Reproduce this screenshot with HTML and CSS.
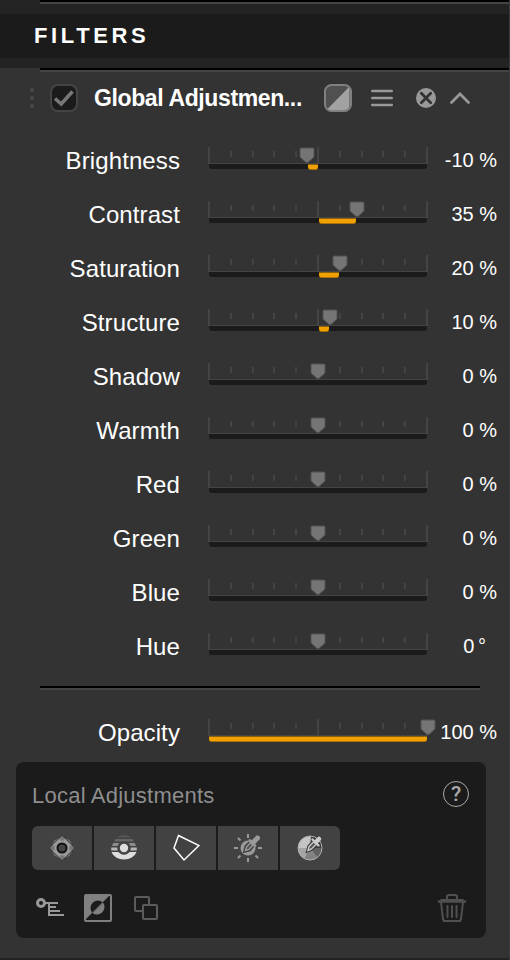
FILE: index.html
```html
<!DOCTYPE html>
<html lang="en">
<head>
    <meta charset="UTF-8">
    <meta name="viewport" content="width=device-width, initial-scale=1.0">
    <title>Filters</title>
    <link rel="stylesheet" href="styles.css">
</head>
<body>

<!-- shared slider shapes -->
<svg class="defs">
    <symbol id="scale" viewBox="0 0 220 17">
        <path fill="#444" d="M0 0h2v16H0zM109 0h2v16h-2zM218 0h2v16h-2zM0 16h220v1H0z"/>
        <path fill="#444" d="M22 4h2v6h-2zM44 4h2v6h-2zM65 4h2v6h-2zM87 4h2v6h-2zM131 4h2v6h-2zM153 4h2v6h-2zM174 4h2v6h-2zM196 4h2v6h-2z"/>
    </symbol>
    <symbol id="thumb" viewBox="0 0 16 17">
        <path fill="#757575" stroke="#525252" d="M1 2Q1 1 2 1H14Q15 1 15 2V10L9.500 15Q8 16.300 6.500 15L1 10Z"/>
    </symbol>
</svg>

<div class="panel">
    <div class="top"></div>
    <header>
        <h1>FILTERS</h1>
    </header>
    <div class="gap"></div>

    <section class="filter">
        <div class="filter-head">
            <svg class="grip" width="6" height="22" viewBox="0 0 6 22">
                <g fill="#494949"><circle cx="3" cy="3" r="2"/><circle cx="3" cy="11" r="2"/><circle cx="3" cy="19" r="2"/></g>
            </svg>
            <svg class="check" width="28" height="28" viewBox="0 0 28 28">
                <rect x="1" y="1" width="26" height="26" rx="7" fill="#1b1b1b" stroke="#444" stroke-width="2"/>
                <path d="M5 14.500L11.200 20L22.500 7.500" fill="none" stroke="#777" stroke-width="3.600"/>
            </svg>
            <h2>Global Adjustmen...</h2>
            <svg class="mask" width="28" height="28" viewBox="0 0 28 28">
                <rect x="1" y="1" width="26" height="26" rx="6" fill="#505050"/>
                <path d="M25.500 2.500V21Q25.500 26 20 26H2.500Z" fill="#a2a2a2"/>
                <rect x="1" y="1" width="26" height="26" rx="6.500" fill="none" stroke="#808080" stroke-width="2"/>
            </svg>
            <svg class="menu" width="22" height="18" viewBox="0 0 22 18">
                <path d="M1.300 2H20.700M1.300 9H20.700M1.300 16H20.700" stroke="#999" stroke-width="2.600" stroke-linecap="round"/>
            </svg>
            <svg class="close" width="20" height="20" viewBox="0 0 20 20">
                <circle cx="10" cy="10" r="10" fill="#999"/>
                <path d="M5.300 5.300L14.700 14.700M14.700 5.300L5.300 14.700" stroke="#333" stroke-width="2.800" stroke-linecap="round"/>
            </svg>
            <svg class="fold" width="20" height="12" viewBox="0 0 20 12">
                <path d="M1.500 10.500L10 2L18.500 10.500" fill="none" stroke="#999" stroke-width="2.700" stroke-linecap="round"/>
            </svg>
        </div>

        <div class="rows">
            <div class="row">
                <label>Brightness</label>
                <div class="slider">
                    <svg class="scale"><use href="#scale"/></svg>
                    <div class="track"></div>
                    <div class="fill" style="left: 100px; width: 10px"></div>
                    <svg class="thumb" style="left: 99px"><use href="#thumb"/></svg>
                </div>
                <output>-10 %</output>
            </div>
            <div class="row">
                <label>Contrast</label>
                <div class="slider">
                    <svg class="scale"><use href="#scale"/></svg>
                    <div class="track"></div>
                    <div class="fill" style="left: 111px; width: 37px"></div>
                    <svg class="thumb" style="left: 149px"><use href="#thumb"/></svg>
                </div>
                <output>35 %</output>
            </div>
            <div class="row">
                <label>Saturation</label>
                <div class="slider">
                    <svg class="scale"><use href="#scale"/></svg>
                    <div class="track"></div>
                    <div class="fill" style="left: 111px; width: 20px"></div>
                    <svg class="thumb" style="left: 132px"><use href="#thumb"/></svg>
                </div>
                <output>20 %</output>
            </div>
            <div class="row">
                <label>Structure</label>
                <div class="slider">
                    <svg class="scale"><use href="#scale"/></svg>
                    <div class="track"></div>
                    <div class="fill" style="left: 111px; width: 10px"></div>
                    <svg class="thumb" style="left: 121.500px"><use href="#thumb"/></svg>
                </div>
                <output>10 %</output>
            </div>
            <div class="row">
                <label>Shadow</label>
                <div class="slider">
                    <svg class="scale"><use href="#scale"/></svg>
                    <div class="track"></div>
                    <svg class="thumb" style="left: 110px"><use href="#thumb"/></svg>
                </div>
                <output>0 %</output>
            </div>
            <div class="row">
                <label>Warmth</label>
                <div class="slider">
                    <svg class="scale"><use href="#scale"/></svg>
                    <div class="track"></div>
                    <svg class="thumb" style="left: 110px"><use href="#thumb"/></svg>
                </div>
                <output>0 %</output>
            </div>
            <div class="row">
                <label>Red</label>
                <div class="slider">
                    <svg class="scale"><use href="#scale"/></svg>
                    <div class="track"></div>
                    <svg class="thumb" style="left: 110px"><use href="#thumb"/></svg>
                </div>
                <output>0 %</output>
            </div>
            <div class="row">
                <label>Green</label>
                <div class="slider">
                    <svg class="scale"><use href="#scale"/></svg>
                    <div class="track"></div>
                    <svg class="thumb" style="left: 110px"><use href="#thumb"/></svg>
                </div>
                <output>0 %</output>
            </div>
            <div class="row">
                <label>Blue</label>
                <div class="slider">
                    <svg class="scale"><use href="#scale"/></svg>
                    <div class="track"></div>
                    <svg class="thumb" style="left: 110px"><use href="#thumb"/></svg>
                </div>
                <output>0 %</output>
            </div>
            <div class="row">
                <label>Hue</label>
                <div class="slider">
                    <svg class="scale"><use href="#scale"/></svg>
                    <div class="track"></div>
                    <svg class="thumb" style="left: 110px"><use href="#thumb"/></svg>
                </div>
                <output class="degree">0 °</output>
            </div>
        </div>

        <div class="divider"></div>

        <div class="row">
            <label>Opacity</label>
            <div class="slider">
                <svg class="scale"><use href="#scale"/></svg>
                <div class="track"></div>
                <div class="fill" style="left: 1px; width: 218px"></div>
                <svg class="thumb" style="left: 220px"><use href="#thumb"/></svg>
            </div>
            <output>100 %</output>
        </div>

        <div class="local">
            <div class="local-head">
                <h3>Local Adjustments</h3>
                <span class="help">?</span>
            </div>
            <div class="tools">
                <button>
                    <svg width="28" height="28" viewBox="0 0 28 28">
                        <circle cx="14" cy="14" r="10.500" fill="#999"/>
                        <g fill="#777"><circle cx="14" cy="4" r="2.700"/><circle cx="24" cy="14" r="2.700"/><circle cx="14" cy="24" r="2.700"/><circle cx="4" cy="14" r="2.700"/></g>
                        <rect x="4.700" y="4.700" width="18.600" height="18.600" rx="2" transform="rotate(45 14 14)" fill="none" stroke="#292929" stroke-opacity="0.700" stroke-width="1.300"/>
                        <circle cx="14" cy="14" r="4.500" fill="#444" stroke="#111" stroke-width="2"/>
                    </svg>
                </button>
                <button>
                    <svg width="28" height="28" viewBox="0 0 28 28">
                        <path d="M6.500 3.500A13 13 0 0 1 21.500 3.500Z" fill="#555"/>
                        <path d="M5.700 5H22.300L24.200 7.500H3.800Z" fill="#666"/>
                        <path d="M3.200 9H24.800L26 12H2Z" fill="#8d8d8d"/>
                        <path d="M1.200 13.500H26.800V16.500H1.200Z" fill="#b5b5b5"/>
                        <path d="M1.500 18H26.500A13 10.500 0 0 1 1.500 18Z" fill="#ddd"/>
                        <circle cx="14" cy="14" r="6.800" fill="#424242"/>
                        <circle cx="14" cy="14" r="4.200" fill="#ddd"/>
                    </svg>
                </button>
                <button>
                    <svg width="28" height="28" viewBox="0 0 28 28">
                        <path d="M6.500 1.500L27 11.500L12 26L2 14Z" fill="none" stroke="#fff" stroke-width="1.500"/>
                    </svg>
                </button>
                <button>
                    <svg width="28" height="28" viewBox="0 0 28 28">
                        <circle cx="14" cy="14" r="7.500" fill="#9a9a9a"/>
                        <path d="M14 0V4M14 24V28M0 14H4M24 14H28M4 4L6.500 6.500M4 24L6.500 21.500M21.500 21.500L24 24" stroke="#9a9a9a" stroke-width="2"/>
                        <path d="M11.500 16.500L12.500 12.500L17 8L19.500 10.500L15.500 15.500Z" fill="#424242" stroke="#424242" stroke-width="4"/>
                        <path d="M11.500 16.500L12.500 13L17 8L19.500 10.500L15 15.500Z" fill="#555" stroke="#9a9a9a" stroke-width="1.400"/>
                        <path d="M15.800 6.500L21 11.700" stroke="#9a9a9a" stroke-width="2.600" stroke-linecap="round"/>
                        <path d="M19 8.500L23.500 4" stroke="#9a9a9a" stroke-width="5" stroke-linecap="round"/>
                    </svg>
                </button>
                <button>
                    <svg width="28" height="28" viewBox="0 0 28 28">
                        <circle cx="14" cy="14" r="12" fill="#c4c4c4"/>
                        <path d="M14 14L15 2A12 12 0 0 1 26 14Z" fill="#3c3c3c"/>
                        <path d="M14 14H26A12 12 0 0 1 21 23.700Z" fill="#626262"/>
                        <path d="M14 14L21 23.700A12 12 0 0 1 8 24.500Z" fill="#828282"/>
                        <path d="M14 14L8 24.500A12 12 0 0 1 2 14Z" fill="#a6a6a6"/>
                        <circle cx="14" cy="14" r="12" fill="none" stroke="#aaa"/>
                        <path d="M12 16.500L13 12.500L18 7.500L20.500 10L15.500 15Z" fill="#555" stroke="#3c3c3c" stroke-width="3.500"/>
                        <path d="M12 16.500L13 12.500L18 7.500L20.500 10L15.500 15Z" fill="#555" stroke="#ccc" stroke-width="1.400"/>
                        <path d="M16.500 5.500L22.500 11.500" stroke="#ccc" stroke-width="2.400" stroke-linecap="round"/>
                        <path d="M20 8L23 5" stroke="#ccc" stroke-width="4.500" stroke-linecap="round"/>
                    </svg>
                </button>
            </div>
            <div class="actions">
                <svg width="28" height="28" viewBox="0 0 28 28">
                    <g fill="none" stroke="#999" stroke-width="2">
                        <circle cx="5" cy="9" r="3.500" stroke-width="3"/>
                        <path d="M9 9H22M13 9V21H28M13 13H20M13 17H24"/>
                    </g>
                </svg>
                <svg width="28" height="28" viewBox="0 0 28 28">
                    <rect x="1" y="1" width="26" height="26" rx="1" fill="#1b1b1b" stroke="#808080" stroke-width="2"/>
                    <path d="M1 1H26L1 26Z" fill="#808080"/>
                    <path d="M19 8.500A7.500 7.500 0 0 1 8.500 19Z" fill="#808080"/>
                    <path d="M18.500 8A7.500 7.500 0 0 0 8 18.500Z" fill="#1b1b1b"/>
                </svg>
                <svg width="28" height="28" viewBox="0 0 28 28">
                    <g fill="#1b1b1b" stroke="#5b5b5b" stroke-width="2">
                        <rect x="3" y="3" width="14" height="14" rx="1"/>
                        <rect x="11" y="11" width="14" height="14" rx="1"/>
                    </g>
                </svg>
                <svg class="trash" width="28" height="28" viewBox="0 0 28 28">
                    <g fill="none" stroke="#505050" stroke-width="2">
                        <path d="M0 7.500H28" stroke-width="2.500"/>
                        <path d="M2.500 6H25.500" stroke-width="2"/>
                        <path d="M9 5.500V3Q9 1 11 1H17Q19 1 19 3V5.500"/>
                        <path d="M3 8L5 25Q5.300 27 7 27H21Q22.700 27 23 25L25 8"/>
                        <path d="M9.500 12V23M14 12V23M18.500 12V23" stroke-linecap="round"/>
                    </g>
                </svg>
            </div>
        </div>
    </section>
</div>

</body>
</html>
```
FILE: styles.css
```css
*,
*::before {
    box-sizing: border-box;
}
body {
    margin: 0;
    font-family: "Liberation Sans", Arial, sans-serif;
    background-color: #232323;
    color: #fff;
}
svg {
    display: block;
    flex: none;
}
.defs {
    position: absolute;
    width: 0;
    height: 0;
}
h1, h2, h3 {
    margin: 0;
}
.panel {
    height: 960px;
    border-right: 1px solid #3b3b3b;
}
.top {
    height: 14px;
}
.top::before,
.filter::before,
.divider {
    content: "";
    display: block;
    height: 4px;
    margin-left: 40px;
    border-top: 2px solid #000;
    border-bottom: 2px solid #444;
}
header {
    display: flex;
    align-items: center;
    height: 44px;
    padding-left: 34px;
    background-color: #1b1b1b;
}
h1 {
    font-size: 22px;
    line-height: 44px;
    letter-spacing: 3.6px;
}
.gap {
    height: 10px;
}
.filter {
    height: 890px;
    background-color: #333;
}
.filter-head {
    display: flex;
    align-items: center;
    height: 52px;
    padding-left: 29px;
}
.check {
    margin-left: 15px;
}
h2 {
    width: 214px;
    margin-left: 16px;
    font-size: 23px;
    line-height: 52px;
    letter-spacing: -0.38px;
    white-space: nowrap;
}
.mask {
    margin-left: 16px;
}
.menu {
    margin-left: 19px;
}
.close {
    margin-left: 23px;
}
.fold {
    margin-left: 14px;
}
.rows {
    padding-top: 9px;
}
.row {
    display: grid;
    grid-template-columns: 180px 220px 1fr;
    column-gap: 28px;
    height: 54px;
    padding-right: 12px;
}
.row label {
    font-size: 24px;
    line-height: 55px;
    letter-spacing: 0.1px;
    text-align: right;
}
.row output {
    margin-left: -28px;
    font-size: 20px;
    line-height: 54px;
    text-align: right;
    white-space: nowrap;
}
.row .degree {
    padding-right: 11px;
    word-spacing: -2px;
}
.slider {
    position: relative;
    padding-top: 14px;
}
.scale {
    width: 220px;
    height: 17px;
}
.track {
    width: 218px;
    height: 5px;
    margin-left: 1px;
    background-color: #1b1b1b;
    border-radius: 0 0 3px 3px;
}
.fill {
    position: absolute;
    top: 31px;
    height: 6px;
    background-color: #f0a000;
    border-top: 1px solid #8a6110;
    border-bottom: 1px solid #a87208;
    border-radius: 0 0 3px 3px;
}
.thumb {
    position: absolute;
    top: 14px;
    width: 16px;
    height: 17px;
    margin-left: -8px;
}
.divider {
    width: 440px;
    margin-top: 13px;
    margin-bottom: 15px;
}
.local {
    width: 470px;
    height: 176px;
    margin: 3px 0 0 16px;
    padding: 16px;
    background-color: #1b1b1b;
    border-radius: 8px;
}
.local-head {
    display: flex;
    justify-content: space-between;
    align-items: center;
    height: 32px;
}
h3 {
    padding-top: 3px;
    font-size: 22px;
    font-weight: normal;
    letter-spacing: 0.23px;
    color: #8e8e8e;
}
.help {
    width: 26px;
    height: 26px;
    margin-right: 1px;
    border: 1px solid #aaa;
    border-radius: 50%;
    font-family: Roboto, sans-serif;
    font-size: 21px;
    font-weight: 500;
    line-height: 25px;
    text-align: center;
    color: #aaa;
}
.tools {
    display: flex;
    gap: 2px;
    width: 308px;
    height: 44px;
    margin-top: 16px;
    border-radius: 6px;
    overflow: hidden;
}
.tools button {
    display: flex;
    flex: 1;
    align-items: center;
    justify-content: center;
    padding: 0;
    border: 0;
    background-color: #424242;
}
.actions {
    display: flex;
    gap: 20px;
    margin-top: 24px;
    padding: 0 4px;
}
.trash {
    margin-left: auto;
}
```
